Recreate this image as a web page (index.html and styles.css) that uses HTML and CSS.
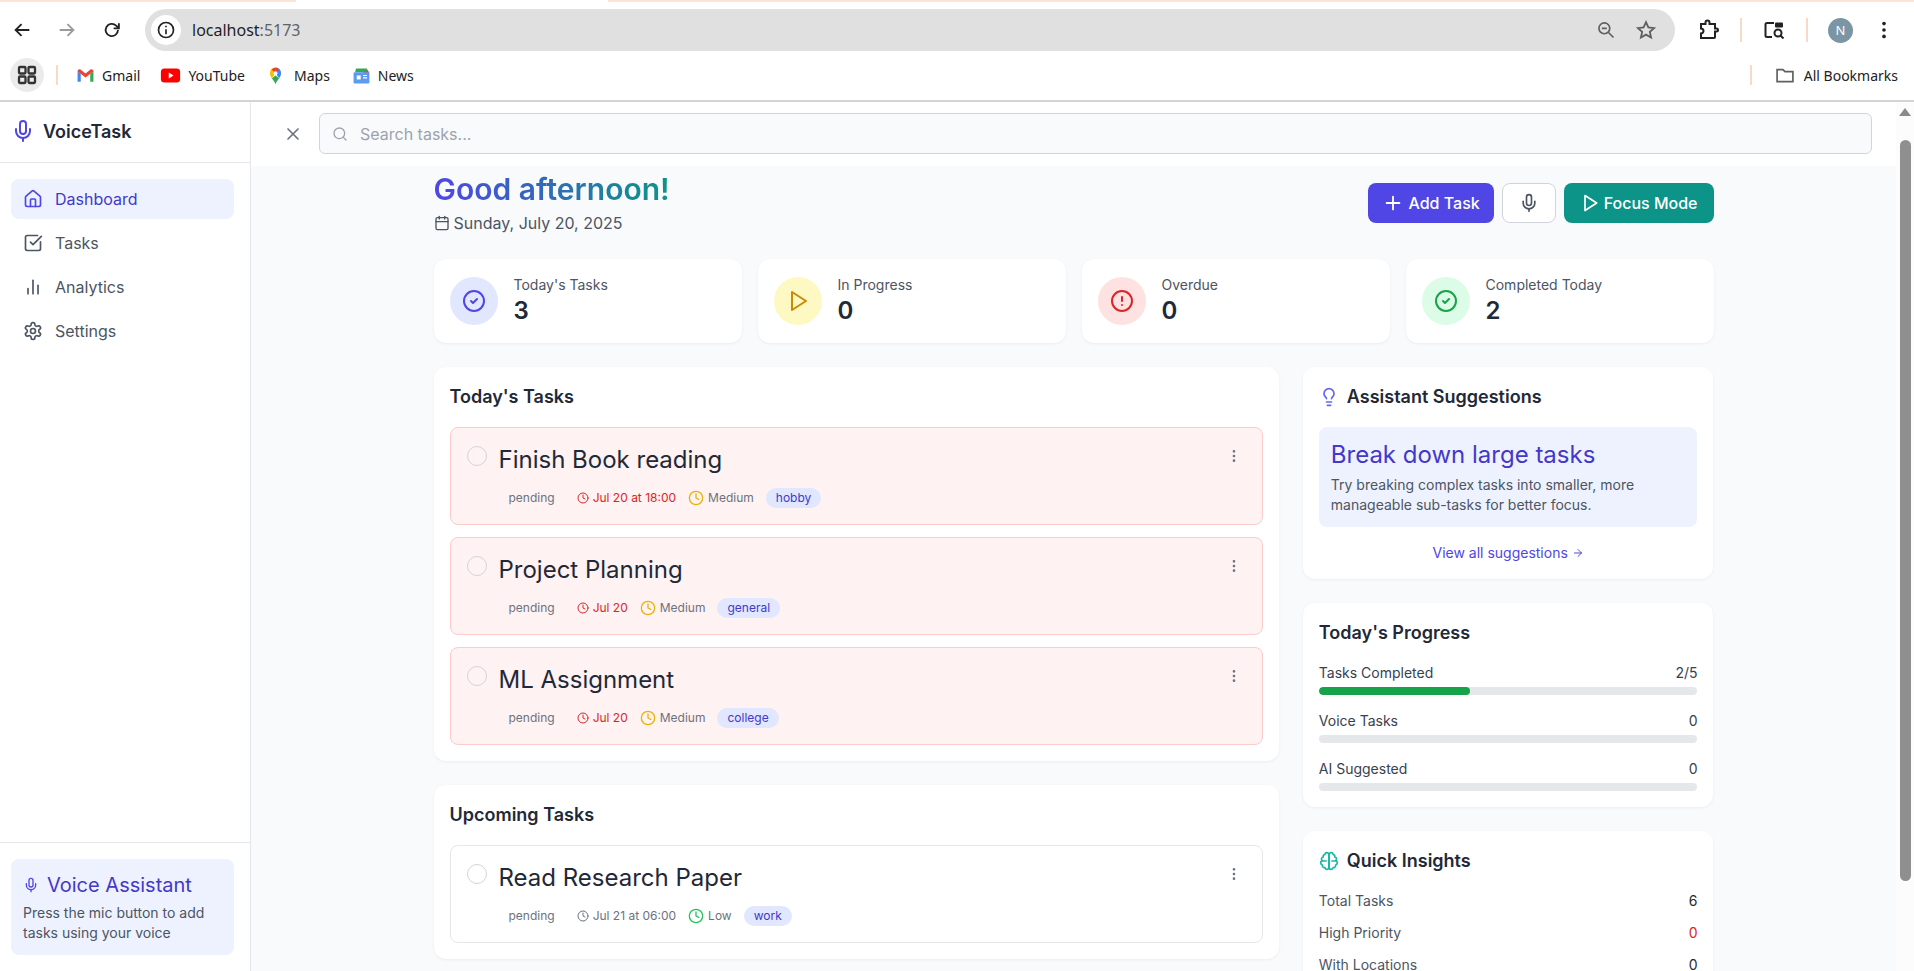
FILE: index.html
```html
<!DOCTYPE html>
<html lang="en">
<head>
<meta charset="utf-8">
<title>VoiceTask</title>
<link rel="stylesheet" href="styles.css">
</head>
<body>
<svg class="defs" width="0" height="0" aria-hidden="true">
  <symbol id="i-mic" viewBox="0 0 24 24"><path d="M12 2a3 3 0 0 0-3 3v7a3 3 0 0 0 6 0V5a3 3 0 0 0-3-3Z"/><path d="M19 10v2a7 7 0 0 1-14 0v-2"/><line x1="12" x2="12" y1="19" y2="22"/></symbol>
  <symbol id="i-home" viewBox="0 0 24 24"><path d="M15 21v-8a1 1 0 0 0-1-1h-4a1 1 0 0 0-1 1v8"/><path d="M3 10a2 2 0 0 1 .709-1.528l7-5.999a2 2 0 0 1 2.582 0l7 5.999A2 2 0 0 1 21 10v9a2 2 0 0 1-2 2H5a2 2 0 0 1-2-2z"/></symbol>
  <symbol id="i-tasks" viewBox="0 0 24 24"><path d="M21 10.5V19a2 2 0 0 1-2 2H5a2 2 0 0 1-2-2V5a2 2 0 0 1 2-2h12.5"/><path d="m9 11 3 3L22 4"/></symbol>
  <symbol id="i-bars" viewBox="0 0 24 24"><line x1="18" y1="20" x2="18" y2="10"/><line x1="12" y1="20" x2="12" y2="4"/><line x1="6" y1="20" x2="6" y2="14"/></symbol>
  <symbol id="i-gear" viewBox="0 0 24 24"><path d="M12.22 2h-.44a2 2 0 0 0-2 2v.18a2 2 0 0 1-1 1.73l-.43.25a2 2 0 0 1-2 0l-.15-.08a2 2 0 0 0-2.73.73l-.22.38a2 2 0 0 0 .73 2.73l.15.1a2 2 0 0 1 1 1.72v.51a2 2 0 0 1-1 1.74l-.15.09a2 2 0 0 0-.73 2.73l.22.38a2 2 0 0 0 2.73.73l.15-.08a2 2 0 0 1 2 0l.43.25a2 2 0 0 1 1 1.73V20a2 2 0 0 0 2 2h.44a2 2 0 0 0 2-2v-.18a2 2 0 0 1 1-1.73l.43-.25a2 2 0 0 1 2 0l.15.08a2 2 0 0 0 2.73-.73l.22-.39a2 2 0 0 0-.73-2.73l-.15-.08a2 2 0 0 1-1-1.74v-.5a2 2 0 0 1 1-1.74l.15-.09a2 2 0 0 0 .73-2.73l-.22-.38a2 2 0 0 0-2.73-.73l-.15.08a2 2 0 0 1-2 0l-.43-.25a2 2 0 0 1-1-1.73V4a2 2 0 0 0-2-2z"/><circle cx="12" cy="12" r="3"/></symbol>
  <symbol id="i-x" viewBox="0 0 24 24"><path d="M18 6 6 18"/><path d="m6 6 12 12"/></symbol>
  <symbol id="i-search" viewBox="0 0 24 24"><circle cx="11" cy="11" r="8"/><path d="m21 21-4.3-4.3"/></symbol>
  <symbol id="i-cal" viewBox="0 0 24 24"><path d="M8 2v4"/><path d="M16 2v4"/><rect width="18" height="18" x="3" y="4" rx="2"/><path d="M3 10h18"/></symbol>
  <symbol id="i-plus" viewBox="0 0 24 24"><path d="M5 12h14"/><path d="M12 5v14"/></symbol>
  <symbol id="i-play" viewBox="0 0 24 24"><polygon points="6 3 20 12 6 21 6 3"/></symbol>
  <symbol id="i-check" viewBox="0 0 24 24"><circle cx="12" cy="12" r="10"/><path d="m9 12 2 2 4-4"/></symbol>
  <symbol id="i-alert" viewBox="0 0 24 24"><circle cx="12" cy="12" r="10"/><line x1="12" x2="12" y1="8" y2="12"/><line x1="12" x2="12.01" y1="16" y2="16"/></symbol>
  <symbol id="i-clock" viewBox="0 0 24 24"><circle cx="12" cy="12" r="10"/><polyline points="12 6 12 12 16 14"/></symbol>
  <symbol id="i-more" viewBox="0 0 24 24"><circle cx="12" cy="12" r="1"/><circle cx="12" cy="5" r="1"/><circle cx="12" cy="19" r="1"/></symbol>
  <symbol id="i-bulb" viewBox="0 0 24 24"><path d="M15 14c.2-1 .7-1.7 1.5-2.5 1-.9 1.5-2.2 1.5-3.5A6 6 0 0 0 6 8c0 1 .2 2.2 1.5 3.5.7.7 1.3 1.5 1.5 2.5"/><path d="M9 18h6"/><path d="M10 22h4"/></symbol>
  <symbol id="i-brain" viewBox="0 0 24 24"><path d="M9.5 2A2.5 2.5 0 0 1 12 4.5v15a2.5 2.5 0 0 1-4.96.44 2.5 2.5 0 0 1-2.96-3.08 3 3 0 0 1-.34-5.58 2.5 2.5 0 0 1 1.32-4.24 2.5 2.5 0 0 1 1.98-3A2.5 2.5 0 0 1 9.5 2Z"/><path d="M14.5 2A2.5 2.5 0 0 0 12 4.5v15a2.5 2.5 0 0 0 4.96.44 2.5 2.5 0 0 0 2.96-3.08 3 3 0 0 0 .34-5.58 2.5 2.5 0 0 0-1.32-4.24 2.5 2.5 0 0 0-1.98-3A2.5 2.5 0 0 0 14.5 2Z"/><path d="M3.8 12h4.7"/><path d="M20.2 12h-4.7"/></symbol>
  <symbol id="i-arrow" viewBox="0 0 24 24"><path d="M5 12h14"/><path d="m12 5 7 7-7 7"/></symbol>
</svg>

<header class="browser">
  <div class="tabstrip"></div>
  <div class="toolbar">
    <div class="navbtns">
      <svg class="cico" viewBox="0 0 24 24"><path d="M20 12H5M11.5 5.500 5 12l6.500 6.500"/></svg>
      <svg class="cico dim" viewBox="0 0 24 24"><path d="M4 12h15M12.500 5.500 19 12l-6.500 6.500"/></svg>
      <svg class="cico" viewBox="0 0 24 24"><path d="M18.500 12a6.700 6.700 0 1 1-2-4.800L19 9.700"/><path d="M19.500 4.500v5.700h-5.700"/></svg>
    </div>
    <div class="omnibox">
      <span class="infochip"><svg class="cico small" viewBox="0 0 24 24"><circle cx="12" cy="12" r="9"/><path d="M12 11v6M12 7v1.800"/></svg></span>
      <span class="url">localhost<span class="port">:5173</span></span>
      <svg class="cico small grey zoomico" viewBox="0 0 24 24"><circle cx="10" cy="10" r="6.500"/><path d="M7 10h6M15 15l6 6"/></svg>
      <svg class="cico grey" viewBox="0 0 24 24"><path d="m12 3.500 2.600 5.700 6.200.7-4.600 4.200 1.300 6.100-5.500-3.100-5.500 3.100 1.300-6.100-4.600-4.200 6.200-.7z"/></svg>
    </div>
    <div class="chromeright">
      <svg class="cico ext" viewBox="0 0 24 24"><path d="M5 6h4.500V4.500a2 2 0 0 1 4 0V6H19v4.500h1.500a1.500 1.500 0 0 1 0 3H19V19a1 1 0 0 1-1 1H5v-4.500a2.500 2.500 0 0 0 0-5V6z"/></svg>
      <span class="vsep"></span>
      <svg class="cico lens" viewBox="0 0 24 24"><path d="M10 19H5a1.500 1.500 0 0 1-1.500-1.500v-11A1.500 1.500 0 0 1 5 5h7"/><rect x="13" y="4.500" width="8" height="5" rx="1" class="fill"/><circle cx="16" cy="15" r="3.500"/><path d="m18.500 17.500 3 3"/></svg>
      <span class="vsep"></span>
      <span class="avatar">N</span>
      <svg class="dots" viewBox="0 0 24 24"><circle cx="12" cy="5" r="2"/><circle cx="12" cy="12" r="2"/><circle cx="12" cy="19" r="2"/></svg>
    </div>
  </div>
  <div class="bookmarks">
    <span class="apps"><svg class="cico" viewBox="0 0 24 24"><rect x="4" y="4" width="6.500" height="6.500" rx="1"/><rect x="13.500" y="4" width="6.500" height="6.500" rx="1"/><rect x="4" y="13.500" width="6.500" height="6.500" rx="1"/><rect x="13.500" y="13.500" width="6.500" height="6.500" rx="1"/></svg></span>
    <span class="vsep tall"></span>
    <span class="bm"><svg class="fav" viewBox="0 0 24 24"><path fill="#4285f4" d="M2 20V7l4 3v10z"/><path fill="#34a853" d="M18 20V10l4-3v13z"/><path fill="#ea4335" d="M2 7c0-2.500 2.500-3.500 4-2.300L12 9.500l6-4.800C19.500 3.500 22 4.500 22 7l-10 7.500z"/></svg>Gmail</span>
    <span class="bm bm-yt"><svg class="fav wide" viewBox="0 0 24 24"><rect x="1" y="4" width="22" height="16" rx="4" fill="#f00"/><path fill="#fff" d="m10 8.500 5.500 3.500-5.500 3.500z"/></svg>YouTube</span>
    <span class="bm bm-maps"><svg class="fav" viewBox="0 0 24 24"><path fill="#34a853" d="M12 23c-1-3-3-5-4.500-7.500L12 12l4.500 3.500C15 18 13 20 12 23z"/><path fill="#fbbc04" d="M5 9c0 2.500 1.200 4.500 2.500 6.500L12 9V2C8 2 5 5 5 9z"/><path fill="#4285f4" d="M12 2v7l4.500 6.500C18 13.500 19 11.500 19 9c0-4-3-7-7-7z"/><path fill="#ea4335" d="M7 4.300 12 9l5-4.700A7 7 0 0 0 7 4.300z"/><circle cx="12" cy="9" r="2.500" fill="#fff"/></svg>Maps</span>
    <span class="bm"><svg class="fav" viewBox="0 0 24 24"><path fill="#34a853" d="M5 3h14l1 5H4z"/><path fill="#ea4335" d="M20 5l2 4H12z"/><rect x="2" y="8" width="20" height="14" rx="1.500" fill="#5c9bf0"/><rect x="6" y="12" width="5" height="5" fill="#fff"/><path stroke="#fff" stroke-width="1.500" d="M14 12h5M14 15h5"/></svg>News</span>
    <span class="bmspacer"></span>
    <span class="vsep tall"></span>
    <span class="bm allbm"><svg class="cico small grey" viewBox="0 0 24 24"><path d="M2.500 5.500h7l2.500 2.500h9.500v12h-19z"/></svg>All Bookmarks</span>
  </div>
</header>

<div class="app">
  <aside class="sidebar">
    <div class="brand"><svg class="ic ic-24 indigo"><use href="#i-mic"/></svg><span>VoiceTask</span></div>
    <nav class="nav">
      <a class="nav-item active"><svg class="ic ic-20"><use href="#i-home"/></svg>Dashboard</a>
      <a class="nav-item"><svg class="ic ic-20"><use href="#i-tasks"/></svg>Tasks</a>
      <a class="nav-item"><svg class="ic ic-20"><use href="#i-bars"/></svg>Analytics</a>
      <a class="nav-item"><svg class="ic ic-20"><use href="#i-gear"/></svg>Settings</a>
    </nav>
    <div class="side-foot">
      <div class="va-box">
        <h3 class="va-title"><svg class="ic ic-16"><use href="#i-mic"/></svg>Voice Assistant</h3>
        <p class="va-text">Press the mic button to add tasks using your voice</p>
      </div>
    </div>
  </aside>

  <main class="main">
    <div class="searchbar">
      <svg class="ic ic-20 closeico"><use href="#i-x"/></svg>
      <div class="searchbox"><svg class="ic ic-16"><use href="#i-search"/></svg><span>Search tasks...</span></div>
    </div>
    <div class="scroll">
      <div class="content">
        <div class="head">
          <div>
            <h1 class="greet">Good afternoon!</h1>
            <p class="date"><svg class="ic ic-16"><use href="#i-cal"/></svg>Sunday, July 20, 2025</p>
          </div>
          <div class="actions">
            <button class="btn btn-primary"><svg class="ic ic-22"><use href="#i-plus"/></svg>Add Task</button>
            <button class="btn btn-ghost"><svg class="ic ic-20"><use href="#i-mic"/></svg></button>
            <button class="btn btn-teal"><svg class="ic ic-20"><use href="#i-play"/></svg>Focus Mode</button>
          </div>
        </div>

        <section class="stats">
          <div class="stat"><span class="stat-ic s-indigo"><svg class="ic ic-24"><use href="#i-check"/></svg></span><div><p class="stat-label">Today's Tasks</p><p class="stat-val">3</p></div></div>
          <div class="stat"><span class="stat-ic s-yellow"><svg class="ic ic-24"><use href="#i-play"/></svg></span><div><p class="stat-label">In Progress</p><p class="stat-val">0</p></div></div>
          <div class="stat"><span class="stat-ic s-red"><svg class="ic ic-24"><use href="#i-alert"/></svg></span><div><p class="stat-label">Overdue</p><p class="stat-val">0</p></div></div>
          <div class="stat"><span class="stat-ic s-green"><svg class="ic ic-24"><use href="#i-check"/></svg></span><div><p class="stat-label">Completed Today</p><p class="stat-val">2</p></div></div>
        </section>

        <div class="columns">
          <div class="col-left">
            <section class="card">
              <h2 class="card-title">Today's Tasks</h2>
              <div class="tasklist">
                <article class="task overdue">
                  <span class="radio"></span>
                  <div class="task-body">
                    <h3 class="task-title">Finish Book reading</h3>
                    <div class="meta"><span class="status">pending</span><span class="when red"><svg class="ic ic-12"><use href="#i-clock"/></svg>Jul 20 at 18:00</span><span class="prio"><svg class="ic ic-16 amber"><use href="#i-clock"/></svg>Medium</span><span class="tag">hobby</span></div>
                  </div>
                  <svg class="ic ic-16 more"><use href="#i-more"/></svg>
                </article>
                <article class="task overdue">
                  <span class="radio"></span>
                  <div class="task-body">
                    <h3 class="task-title">Project Planning</h3>
                    <div class="meta"><span class="status">pending</span><span class="when red"><svg class="ic ic-12"><use href="#i-clock"/></svg>Jul 20</span><span class="prio"><svg class="ic ic-16 amber"><use href="#i-clock"/></svg>Medium</span><span class="tag">general</span></div>
                  </div>
                  <svg class="ic ic-16 more"><use href="#i-more"/></svg>
                </article>
                <article class="task overdue">
                  <span class="radio"></span>
                  <div class="task-body">
                    <h3 class="task-title">ML Assignment</h3>
                    <div class="meta"><span class="status">pending</span><span class="when red"><svg class="ic ic-12"><use href="#i-clock"/></svg>Jul 20</span><span class="prio"><svg class="ic ic-16 amber"><use href="#i-clock"/></svg>Medium</span><span class="tag">college</span></div>
                  </div>
                  <svg class="ic ic-16 more"><use href="#i-more"/></svg>
                </article>
              </div>
            </section>
            <section class="card">
              <h2 class="card-title">Upcoming Tasks</h2>
              <div class="tasklist">
                <article class="task">
                  <span class="radio"></span>
                  <div class="task-body">
                    <h3 class="task-title">Read Research Paper</h3>
                    <div class="meta"><span class="status">pending</span><span class="when"><svg class="ic ic-12"><use href="#i-clock"/></svg>Jul 21 at 06:00</span><span class="prio"><svg class="ic ic-16 green"><use href="#i-clock"/></svg>Low</span><span class="tag">work</span></div>
                  </div>
                  <svg class="ic ic-16 more"><use href="#i-more"/></svg>
                </article>
              </div>
            </section>
          </div>

          <div class="col-right">
            <section class="card">
              <h2 class="card-title with-ic"><svg class="ic ic-20 bulb"><use href="#i-bulb"/></svg>Assistant Suggestions</h2>
              <div class="suggest">
                <h3 class="suggest-title">Break down large tasks</h3>
                <p class="suggest-text">Try breaking complex tasks into smaller, more manageable sub-tasks for better focus.</p>
              </div>
              <a class="viewall">View all suggestions<svg class="ic ic-12"><use href="#i-arrow"/></svg></a>
            </section>
            <section class="card">
              <h2 class="card-title">Today's Progress</h2>
              <div class="progress">
                <div class="pr"><div class="pr-row"><span>Tasks Completed</span><span>2/5</span></div><div class="bar"><div class="bar-fill" style="width:40%"></div></div></div>
                <div class="pr"><div class="pr-row"><span>Voice Tasks</span><span>0</span></div><div class="bar"></div></div>
                <div class="pr"><div class="pr-row"><span>AI Suggested</span><span>0</span></div><div class="bar"></div></div>
              </div>
            </section>
            <section class="card">
              <h2 class="card-title with-ic"><svg class="ic ic-20 teal"><use href="#i-brain"/></svg>Quick Insights</h2>
              <div class="insights">
                <div class="ins"><span>Total Tasks</span><span class="ins-val">6</span></div>
                <div class="ins"><span>High Priority</span><span class="ins-val red">0</span></div>
                <div class="ins"><span>With Locations</span><span class="ins-val">0</span></div>
              </div>
            </section>
          </div>
        </div>
      </div>
    </div>
  </main>

  <div class="scrollbar">
    <span class="arrow"></span>
    <span class="thumb"></span>
  </div>
</div>
</body>
</html>
```
FILE: styles.css
```css
* { box-sizing: border-box; }
html, body { margin: 0; height: 100%; overflow: hidden; }
body { font-family: Inter, "Liberation Sans", sans-serif; color: #1f2937; background: #fff; display: flex; flex-direction: column; }
h1, h2, h3, p { margin: 0; }
.defs { position: absolute; }

/* browser chrome */
.browser { height: 102px; flex: none; border-bottom: 2px solid #d4d4d4; background: #fff; font-family: "Noto Sans", sans-serif; }
.tabstrip { height: 2px; background: linear-gradient(90deg, #fde3d6 0 296px, #fff 296px 608px, #fde3d6 608px); }
.toolbar { display: flex; align-items: center; padding: 0 0 0 11px; margin-top: 7px; height: 42px; }
.navbtns { display: flex; gap: 23px; width: 134px; align-items: center; }
.cico { width: 22px; height: 22px; fill: none; stroke: #222; stroke-width: 2; flex: none; }
.cico.small { width: 20px; height: 20px; }
.cico.dim { stroke: #9a9a9a; }
.cico.grey { stroke: #5f5f5f; }
.cico .fill { fill: #222; stroke: none; }
.omnibox { width: 1530px; height: 42px; border-radius: 21px; background: #e0e0e0; display: flex; align-items: center; padding: 0 18px 0 6px; }
.infochip { width: 30px; height: 30px; border-radius: 50%; background: #fff; display: flex; align-items: center; justify-content: center; margin-right: 11px; }
.url { font-size: 16px; color: #1f1f1f; flex: 1; }
.port { color: #5f6368; }
.zoomico { margin-right: 19px; }
.chromeright { display: flex; align-items: center; margin-left: 21px; }
.ext, .lens { width: 24px; height: 24px; }
.vsep { width: 2px; height: 24px; background: #fbd9c6; display: block; flex: none; }
.chromeright .vsep { margin: 0 20px; }
.avatar { width: 25px; height: 25px; border-radius: 50%; background: #7b95a5; color: #fff; font-size: 13px; display: flex; align-items: center; justify-content: center; }
.dots { width: 22px; height: 22px; fill: #222; margin-left: 20px; }
.bookmarks { height: 50px; display: flex; align-items: center; padding: 0 16px 2px 10px; font-size: 14px; color: #222; }
.apps { width: 34px; height: 34px; border-radius: 50%; background: #ebebeb; display: flex; align-items: center; justify-content: center; margin-right: 12px; }
.apps .cico { stroke: #333; stroke-width: 2.300; width: 24px; height: 24px; }
.vsep.tall { height: 20px; margin-right: 18px; }
.bm { display: flex; align-items: center; gap: 7px; margin-right: 20px; }
.bm-yt { margin-right: 21px; }
.bm-maps { gap: 9px; margin-right: 22px; }
.fav { width: 19px; height: 19px; flex: none; }
.fav.wide { width: 21px; height: 21px; }
.bmspacer { flex: 1; }
.allbm { margin: 0 0 0 5px; gap: 9px; }

/* app */
.app { flex: 1; min-height: 0; display: flex; }
.sidebar { width: 251px; flex: none; border-right: 1px solid #e5e7eb; background: #fff; display: flex; flex-direction: column; }
.brand { height: 61px; border-bottom: 1px solid #e5e7eb; display: flex; align-items: center; gap: 8px; padding: 0 11px 2px; font-size: 18px; font-weight: 600; color: #1f2937; }
.nav { flex: 1; padding: 16px 16px 16px 11px; display: flex; flex-direction: column; gap: 4px; }
.nav-item { height: 40px; display: flex; align-items: center; gap: 12px; padding: 0 12px; border-radius: 8px; font-size: 16px; color: #4b5563; }
.nav-item .ic { stroke: #4b5563; }
.nav-item.active { background: #eef2ff; color: #4338ca; }
.nav-item.active .ic { stroke: #4f46e5; }
.side-foot { height: 129px; flex: none; border-top: 1px solid #e5e7eb; padding: 16px 16px 16px 11px; }
.va-box { background: #eef2ff; border-radius: 8px; height: 96px; padding: 12px; }
.va-title { display: flex; align-items: center; gap: 8px; font-size: 20px; font-weight: 400; line-height: 28px; color: #4338ca; margin-bottom: 4px; }
.va-title .ic { stroke: #4f46e5; }
.va-text { font-size: 14px; line-height: 20px; color: #4b5563; }

.ic { fill: none; stroke: currentColor; stroke-width: 2; stroke-linecap: round; stroke-linejoin: round; flex: none; }
.ic-12 { width: 12px; height: 12px; }
.ic-16 { width: 16px; height: 16px; }
.ic-20 { width: 20px; height: 20px; }
.ic-22 { width: 22px; height: 22px; }
.ic-24 { width: 24px; height: 24px; }
.indigo { color: #4f46e5; }
.amber { color: #eab308; }
.green { color: #22c55e; }
.teal { color: #14b8a6; }
.red { color: #dc2626; }

.main { flex: 1; min-width: 0; display: flex; flex-direction: column; background: #f9fafb; }
.searchbar { height: 64px; flex: none; background: #fff; display: flex; align-items: center; padding: 0 24px 0 32px; gap: 16px; }
.closeico { color: #6b7280; }
.searchbox { flex: 1; height: 41px; border: 1px solid #d1d5db; border-radius: 6px; background: #f9fafb; display: flex; align-items: center; gap: 12px; padding: 0 12px; font-size: 16px; color: #9ca3af; margin-top: -1px; }
.scroll { flex: 1; min-height: 0; overflow: hidden; }
.content { width: 1280px; margin: 0 auto; padding-top: 5px; }
.head { display: flex; justify-content: space-between; align-items: flex-start; height: 88px; }
.greet { font-size: 30px; line-height: 36px; font-weight: 600; background: linear-gradient(90deg, #4f46e5, #0d9488); -webkit-background-clip: text; background-clip: text; color: transparent; width: max-content; }
.date { display: flex; align-items: center; gap: 4px; font-size: 16px; line-height: 24px; color: #4b5563; margin-top: 4px; }
.actions { display: flex; gap: 8px; margin-top: 12px; }
.btn { height: 40px; border-radius: 8px; border: 0; display: flex; align-items: center; gap: 4px; font: 500 16px Inter, sans-serif; padding: 0 16px; }
.btn-primary { background: #4f46e5; color: #fff; padding: 0 14px; gap: 5px; }
.btn-ghost { background: #fff; color: #4b5563; border: 1px solid #d1d5db; width: 54px; justify-content: center; }
.btn-teal { background: #0d9488; color: #fff; }

.stats { display: grid; grid-template-columns: repeat(4, 1fr); gap: 16px; margin-bottom: 24px; }
.stat { height: 84px; background: #fff; border-radius: 12px; box-shadow: 0 1px 3px rgba(0,0,0,.06); padding: 0 16px; display: flex; align-items: center; gap: 16px; }
.stat-ic { width: 48px; height: 48px; border-radius: 50%; display: flex; align-items: center; justify-content: center; flex: none; }
.s-indigo { background: #e0e7ff; color: #4f46e5; }
.s-yellow { background: #fef9c3; color: #ca8a04; }
.s-red { background: #fee2e2; color: #dc2626; }
.s-green { background: #dcfce7; color: #16a34a; }
.stat-label { font-size: 14px; line-height: 20px; color: #4b5563; }
.stat-val { font-size: 24px; line-height: 32px; font-weight: 600; color: #1f2937; }

.columns { display: grid; grid-template-columns: repeat(3, 1fr); gap: 24px; }
.col-left { grid-column: span 2; }
.col-left, .col-right { display: flex; flex-direction: column; gap: 24px; }
.card { background: #fff; border-radius: 12px; box-shadow: 0 1px 3px rgba(0,0,0,.06); padding: 16px; }
.card-title { font-size: 18px; line-height: 28px; font-weight: 600; color: #1f2937; margin-bottom: 16px; }
.with-ic { display: flex; align-items: center; gap: 8px; }
.bulb { color: #6366f1; }
.tasklist { display: flex; flex-direction: column; gap: 12px; }
.task { height: 98px; border: 1px solid #e5e7eb; border-radius: 8px; padding: 16px; display: flex; align-items: flex-start; gap: 12px; background: #fff; }
.task.overdue { background: #fef2f2; border-color: #fecaca; }
.radio { width: 20px; height: 20px; border-radius: 50%; border: 1px solid #d1d5db; flex: none; margin-top: 2px; }
.task-body { flex: 1; min-width: 0; }
.task-title { font-size: 24px; line-height: 32px; font-weight: 400; color: #1f2937; }
.meta { display: flex; align-items: center; font-size: 12px; line-height: 16px; color: #6b7280; gap: 12px; margin-top: 12px; height: 20px; padding-left: 10px; }
.status { margin-right: 10px; }
.when, .prio { display: flex; align-items: center; gap: 4px; }
.tag { height: 20px; border-radius: 10px; background: #e0e7ff; color: #4338ca; padding: 0 10px; display: flex; align-items: center; }
.more { color: #6b7280; margin-top: 4px; margin-right: 4px; }

.suggest { background: #eef2ff; border-radius: 8px; padding: 12px; height: 100px; }
.suggest-title { font-size: 24px; line-height: 32px; font-weight: 400; color: #4338ca; margin-bottom: 4px; }
.suggest-text { font-size: 14px; line-height: 20px; color: #4b5563; }
.viewall { display: flex; justify-content: center; align-items: center; gap: 4px; font-size: 14px; line-height: 20px; color: #4f46e5; margin-top: 16px; }
.progress { display: flex; flex-direction: column; gap: 16px; }
.pr-row { display: flex; justify-content: space-between; font-size: 14px; line-height: 20px; color: #374151; margin-bottom: 4px; }
.bar { height: 8px; border-radius: 4px; background: #e5e7eb; overflow: hidden; }
.bar-fill { height: 100%; background: #16a34a; border-radius: 4px; }
.insights { display: flex; flex-direction: column; gap: 12px; }
.ins { display: flex; justify-content: space-between; font-size: 14px; line-height: 20px; color: #4b5563; }
.ins-val { color: #1f2937; }
.ins-val.red { color: #dc2626; }

.scrollbar { width: 18px; flex: none; background: #fcfcfc; display: flex; flex-direction: column; align-items: center; }
.arrow { width: 0; height: 0; border-left: 6px solid transparent; border-right: 6px solid transparent; border-bottom: 8px solid #8a8a8a; margin-top: 6px; }
.thumb { width: 11px; height: 741px; background: #8f8f8f; border-radius: 5.500px; margin-top: 24px; }
```
